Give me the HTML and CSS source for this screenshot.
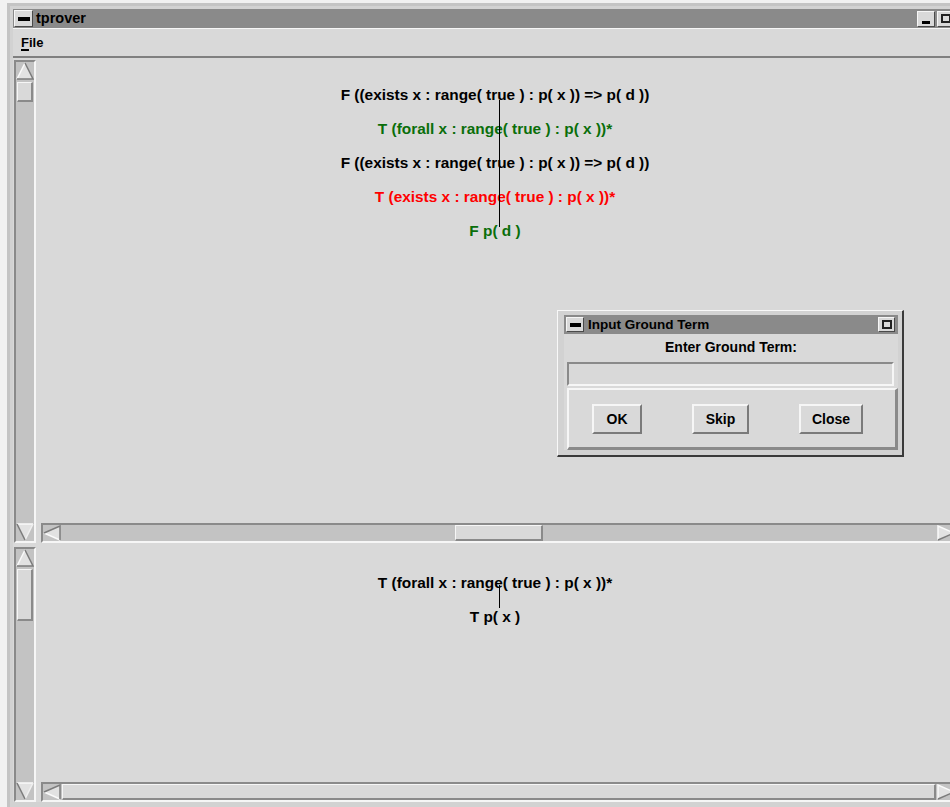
FILE: index.html
```html
<!DOCTYPE html>
<html lang="en">
<head>
<meta charset="utf-8">
<title>tprover</title>
<link rel="stylesheet" href="styles.css">
</head>
<body>
<div class="win">
  <div class="titlebar">
    <span class="tb-btn tb-menu"><span class="bar"></span></span>
    <span class="tb-title">tprover</span>
    <span class="tb-right">
      <span class="tb-btn tb-iconify"><span class="dot"></span></span>
      <span class="tb-btn tb-max"><span class="box"></span></span>
    </span>
  </div>
  <div class="menubar"><span class="menu"><u>F</u>ile</span></div>

  <div class="pane pane-top">
    <div class="vscroll">
      <svg class="arr" width="18" height="18" viewBox="0 0 18 18"><polygon points="9,1 17,17 1,17" fill="#e2e2e2"/><polyline points="1,17 9,1" fill="none" stroke="#fafafa" stroke-width="1.5"/><polyline points="9,1 17,17 1,17" fill="none" stroke="#7c7c7c" stroke-width="1.5"/></svg>
      <span class="vthumb vthumb-top"></span>
      <svg class="arr arr-end" width="18" height="18" viewBox="0 0 18 18"><polygon points="1,1 17,1 9,17" fill="#e2e2e2"/><polyline points="17,1 1,1" fill="none" stroke="#fafafa" stroke-width="1.5"/><polyline points="9,17 17,1" fill="none" stroke="#f0f0f0" stroke-width="1.5"/><polyline points="1,1 9,17" fill="none" stroke="#7c7c7c" stroke-width="1.5"/></svg>
    </div>
    <div class="main">
      <div class="canvas">
        <div class="tree tree-top">
          <div class="node">F ((exists x : range( true ) : p( x )) =&gt; p( d ))</div>
          <div class="node green">T (forall x : range( true ) : p( x ))*</div>
          <div class="node">F ((exists x : range( true ) : p( x )) =&gt; p( d ))</div>
          <div class="node red">T (exists x : range( true ) : p( x ))*</div>
          <div class="node green">F p( d )</div>
          <span class="edge"></span>
        </div>
      </div>
      <div class="hscroll hscroll-top">
        <svg class="arr" width="18" height="16" viewBox="0 0 18 16"><polygon points="1,8 17,1 17,15" fill="#e2e2e2"/><polyline points="1,8 17,15" fill="none" stroke="#fafafa" stroke-width="1.5"/><polyline points="1,8 17,1 17,15" fill="none" stroke="#7c7c7c" stroke-width="1.5"/></svg>
        <span class="hthumb hthumb-top"></span>
        <svg class="arr arr-right" width="18" height="16" viewBox="0 0 18 16"><polygon points="1,1 17,8 1,15" fill="#e2e2e2"/><polyline points="1,15 1,1 17,8" fill="none" stroke="#fafafa" stroke-width="1.5"/><polyline points="17,8 1,15" fill="none" stroke="#7c7c7c" stroke-width="1.5"/></svg>
      </div>
    </div>
  </div>

  <div class="pane pane-bottom">
    <div class="vscroll">
      <svg class="arr" width="18" height="18" viewBox="0 0 18 18"><polygon points="9,1 17,17 1,17" fill="#e2e2e2"/><polyline points="1,17 9,1" fill="none" stroke="#fafafa" stroke-width="1.5"/><polyline points="9,1 17,17 1,17" fill="none" stroke="#7c7c7c" stroke-width="1.5"/></svg>
      <span class="vthumb vthumb-bottom"></span>
      <svg class="arr arr-end" width="18" height="18" viewBox="0 0 18 18"><polygon points="1,1 17,1 9,17" fill="#e2e2e2"/><polyline points="17,1 1,1" fill="none" stroke="#fafafa" stroke-width="1.5"/><polyline points="9,17 17,1" fill="none" stroke="#f0f0f0" stroke-width="1.5"/><polyline points="1,1 9,17" fill="none" stroke="#7c7c7c" stroke-width="1.5"/></svg>
    </div>
    <div class="main">
      <div class="canvas">
        <div class="tree tree-bottom">
          <div class="node">T (forall x : range( true ) : p( x ))*</div>
          <div class="node">T p( x )</div>
          <span class="edge"></span>
        </div>
      </div>
      <div class="hscroll hscroll-bottom">
        <svg class="arr" width="18" height="16" viewBox="0 0 18 16"><polygon points="1,8 17,1 17,15" fill="#e2e2e2"/><polyline points="1,8 17,15" fill="none" stroke="#fafafa" stroke-width="1.5"/><polyline points="1,8 17,1 17,15" fill="none" stroke="#7c7c7c" stroke-width="1.5"/></svg>
        <span class="hthumb hthumb-full"></span>
        <svg class="arr" width="18" height="16" viewBox="0 0 18 16"><polygon points="1,1 17,8 1,15" fill="#e2e2e2"/><polyline points="1,15 1,1 17,8" fill="none" stroke="#fafafa" stroke-width="1.5"/><polyline points="17,8 1,15" fill="none" stroke="#7c7c7c" stroke-width="1.5"/></svg>
      </div>
    </div>
  </div>
</div>

<div class="dialog">
  <div class="dlg-title">
    <span class="tb-btn dlg-menu"><span class="bar"></span></span>
    <span class="dlg-name">Input Ground Term</span>
    <span class="tb-btn dlg-max"><span class="box"></span></span>
  </div>
  <div class="dlg-body">
    <div class="dlg-label">Enter Ground Term:</div>
    <div class="dlg-entry"></div>
    <div class="dlg-buttons">
      <span class="btn btn-ok">OK</span>
      <span class="btn btn-skip">Skip</span>
      <span class="btn btn-close">Close</span>
    </div>
  </div>
</div>
</body>
</html>
```

FILE: styles.css
```css
* { box-sizing: border-box; }

html, body { margin: 0; padding: 0; }

body {
  position: relative;
  width: 950px;
  height: 807px;
  overflow: hidden;
  background: #f1f1f1;
  font-family: "Liberation Sans", Arial, Helvetica, sans-serif;
  font-weight: bold;
  color: #000;
}

/* main application window */
.win {
  margin: 3px 0 0 7px;
  width: 955px;
  height: 804px;
  background: #d2d2d2;
  border-top: 3px solid #c4c4c4;
  border-left: 3px solid #c4c4c4;
  padding: 3px 5px 5px 3px;
  display: flex;
  flex-direction: column;
}

.titlebar {
  height: 19px;
  flex: none;
  background: #8a8a8a;
  display: flex;
  align-items: center;
}

.tb-btn {
  display: flex;
  align-items: center;
  justify-content: center;
  background: #d9d9d9;
  border: 1px solid;
  border-color: #f6f6f6 #4a4a4a #4a4a4a #f6f6f6;
}

.tb-menu { width: 19px; height: 17px; margin-left: 1px; }
.tb-menu .bar, .dlg-menu .bar { width: 12px; height: 4px; background: #000; }

.tb-title {
  margin-left: 3px;
  font-size: 14.5px;
  line-height: 19px;
}

.tb-right {
  margin-left: auto;
  margin-right: 2px;
  display: flex;
  gap: 2px;
}

.tb-iconify { width: 18px; height: 16px; align-items: flex-end; padding-bottom: 2px; }
.tb-iconify .dot { width: 8px; height: 3px; background: #000; }
.tb-max { width: 18px; height: 16px; }
.tb-max .box, .dlg-max .box {
  width: 10px;
  height: 9px;
  border: 2px solid #222;
  background: #dcdcdc;
}

.menubar {
  height: 30px;
  flex: none;
  background: #d9d9d9;
  border-top: 1px solid #f6f6f6;
  border-bottom: 2px solid #808080;
  padding-left: 8px;
  display: flex;
  align-items: center;
}

.menu { font-size: 13px; }
.menu u { text-decoration-thickness: 2px; text-underline-offset: 2px; }

/* paned canvases */
.pane {
  display: flex;
  flex: none;
  background: #d9d9d9;
}
.pane-top { height: 487px; }
.pane-bottom { height: 257px; }

.vscroll {
  width: 22px;
  margin-left: 1px;
  background: #c3c3c3;
  border: 2px solid;
  border-color: #8a8a8a #f6f6f6 #f6f6f6 #8a8a8a;
  display: flex;
  flex-direction: column;
  align-items: center;
}
.pane-top .vscroll { margin-top: 2px; margin-bottom: 2px; }
.pane-bottom .vscroll { margin-top: 2px; }

.arr { display: block; flex: none; }
.arr-end { margin-top: auto; }

.vthumb {
  width: 16px;
  margin-top: 2px;
  background: #d9d9d9;
  border: 1px solid;
  border-width: 1px 2px 2px 1px;
  border-color: #f6f6f6 #8a8a8a #8a8a8a #f6f6f6;
}
.vthumb-top { height: 20px; }
.vthumb-bottom { height: 52px; }

.main {
  flex: 1;
  display: flex;
  flex-direction: column;
  margin-left: 1px;
}

.canvas {
  flex: 1;
  background: #d9d9d9;
  overflow: hidden;
}

.hscroll {
  height: 20px;
  flex: none;
  margin-left: 4px;
  background: #c3c3c3;
  border: 2px solid;
  border-color: #8a8a8a #f6f6f6 #f6f6f6 #8a8a8a;
  display: flex;
  align-items: center;
}
.hscroll-top { margin-bottom: 2px; }

.hthumb {
  height: 16px;
  background: #d9d9d9;
  border: 1px solid;
  border-width: 1px 2px 2px 1px;
  border-color: #f6f6f6 #8a8a8a #8a8a8a #f6f6f6;
}
.hthumb-top { width: 88px; margin-left: 394px; }
.hthumb-full { flex: 1; margin: 0 1px 0 1px; }
.arr-right { margin-left: auto; }

/* proof tree */
.tree {
  position: relative;
  width: 400px;
  margin-left: 258px;
  display: flex;
  flex-direction: column;
  align-items: center;
}
.tree-top { padding-top: 20px; }
.tree-bottom { padding-top: 21px; }

.node {
  height: 34px;
  line-height: 34px;
  font-size: 15.4px;
  white-space: pre;
  color: #000;
}
.node.green { color: #0a6e0a; }
.node.red { color: #ff0000; }

.edge {
  position: absolute;
  left: 204px;
  width: 1px;
  background: #000;
}
.tree-top .edge { top: 42px; height: 127px; }
.tree-bottom .edge { top: 40px; height: 23px; }

/* floating dialog */
.dialog {
  position: absolute;
  left: 557px;
  top: 310px;
  width: 347px;
  height: 147px;
  background: #d2d2d2;
  border-top: 1px solid #f8f8f8;
  border-left: 1px solid #f8f8f8;
  border-right: 2px solid #3a3a3a;
  border-bottom: 2px solid #3a3a3a;
  padding: 4px 4px 5px 6px;
  display: flex;
  flex-direction: column;
}

.dlg-title {
  height: 19px;
  flex: none;
  background: #8a8a8a;
  display: flex;
  align-items: center;
}
.dlg-menu { width: 18px; height: 15px; margin-left: 2px; }
.dlg-menu .bar { width: 11px; height: 4px; }
.dlg-name { margin-left: 4px; font-size: 13.5px; line-height: 19px; }
.dlg-max { width: 17px; height: 15px; margin-left: auto; margin-right: 3px; }

.dlg-body {
  flex: 1;
  background: #d9d9d9;
  display: flex;
  flex-direction: column;
}

.dlg-label {
  height: 26px;
  flex: none;
  line-height: 26px;
  text-align: center;
  font-size: 14px;
}

.dlg-entry {
  height: 24px;
  flex: none;
  margin: 2px 4px 0 3px;
  background: #d9d9d9;
  border: 2px solid;
  border-color: #8a8a8a #f6f6f6 #f6f6f6 #8a8a8a;
}

.dlg-buttons {
  flex: 1;
  margin: 2px 0 0 3px;
  border: 2px solid;
  border-width: 2px 3px 3px 2px;
  border-color: #f6f6f6 #8a8a8a #8a8a8a #f6f6f6;
  display: flex;
  align-items: center;
  gap: 50px;
  padding-left: 23px;
}

.btn {
  height: 30px;
  display: flex;
  align-items: center;
  justify-content: center;
  font-size: 14px;
  background: #d9d9d9;
  border: 2px solid;
  border-color: #f6f6f6 #7a7a7a #7a7a7a #f6f6f6;
}
.btn-ok { width: 50px; }
.btn-skip { width: 57px; }
.btn-close { width: 64px; }
```
